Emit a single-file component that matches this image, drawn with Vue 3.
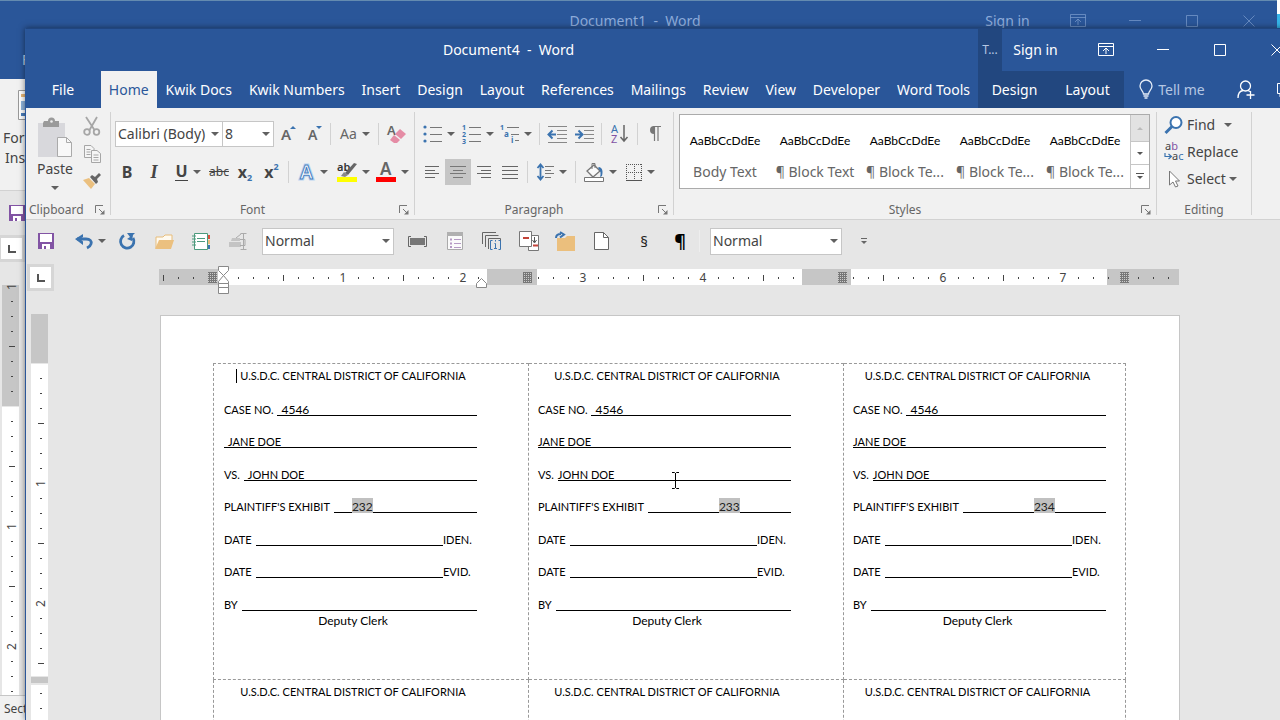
<script setup>
import { h, ref } from 'vue'

const Caret = () =>
  h('svg', { class: 'caret', width: 8, height: 4, viewBox: '0 0 8 4', 'aria-hidden': 'true' }, [
    h('path', { d: 'M0 0H8L4 4Z', fill: '#606060' }),
  ])
const Launcher = () =>
  h('svg', { width: 10, height: 10, viewBox: '0 0 10 10', 'aria-hidden': 'true' }, [
    h('path', { d: 'M.5 8V.5H8M4 4l4 4', fill: 'none', stroke: '#777' }),
    h('path', { d: 'M9.500 5v4.500H5z', fill: '#777' }),
  ])

const tabs = ['File', 'Home', 'Kwik Docs', 'Kwik Numbers', 'Insert', 'Design', 'Layout', 'References', 'Mailings', 'Review', 'View', 'Developer', 'Word Tools']
const active = ref('Home')
const styleNames = ['Body Text', '¶ Block Text', '¶ Block Te...', '¶ Block Te...', '¶ Block Te...']

const heading = 'U.S.D.C. CENTRAL DISTRICT OF CALIFORNIA'
const labels = [
  { exhibit: '232', first: true },
  { exhibit: '233' },
  { exhibit: '234' },
]

/* Horizontal ruler: 120 units per inch, zero at 64 */
const hShade = [[0, 59], [328, 50], [643, 49], [948, 72]]
const hGrids = [49, 364, 679, 961]
const hMarks = []
for (let i = -4; i <= 63; i++) {
  const x = 64 + i * 15
  const skip = i === -1 || i === 0 || (x > 325 && x < 378) || (x > 640 && x < 692) || i === 60
  if (skip) continue
  if (i > 0 && i % 8 === 0) hMarks.push({ x, n: i / 8 })
  else hMarks.push({ x, tall: i % 4 === 0 })
}

/* Vertical rulers share the same scale */
const vMarks = (zero, from, to) => {
  const out = []
  for (let i = from; i <= to; i++) {
    if (i === 0) continue
    const y = zero + i * 15
    if (i % 8 === 0) out.push({ y, n: Math.abs(i / 8) })
    else out.push({ y, tall: i % 4 === 0 })
  }
  return out
}
const frontMarks = vMarks(49, 1, 20).concat([{ y: 379 }, { y: 394 }])
const backMarks = vMarks(121, -8, 19)
</script>

<template>
  <div class="desktop">
    <section class="window back" aria-label="Document1">
      <header class="titlebar">
        <h2 class="title">Document1&nbsp; -&nbsp; Word</h2>
        <button class="signin">Sign in</button>
        <button class="winbtn" aria-label="Ribbon options"><svg width="16" height="14" viewBox="0 0 16 14"><path d="M.5.5h15v12H.500zM.5 3.500h15M8 11V5.500M5 8l3-3 3 3" /></svg></button>
        <button class="winbtn" aria-label="Minimize"><svg width="12" height="14" viewBox="0 0 12 14"><path d="M0 6.500h12" /></svg></button>
        <button class="winbtn" aria-label="Maximize"><svg width="12" height="12" viewBox="0 0 12 12"><path d="M.5.5h11v11H.5z" /></svg></button>
        <button class="winbtn" aria-label="Close"><svg width="12" height="12" viewBox="0 0 12 12"><path d="M.5.5l11 11M11.500.5l-11 11" /></svg></button>
      </header>
      <div class="back-tab">File</div>
      <div class="back-ribbon">
        <svg width="16" height="30" viewBox="0 0 16 30"><path d="M.5.5h15v29H.5z" fill="#fff" stroke="#999" /><path d="M3 4h12v3H3z" fill="#e8b878" /><path d="M3 11h12v9H3z" fill="#8fb3dc" /><path d="M3 23h12v3H3z" fill="#4a7ebb" /></svg>
        <span>Form</span>
        <span>Insert</span>
      </div>
      <div class="back-qat">
        <svg width="16" height="16" viewBox="0 0 16 16"><path d="M0 0h16v16H0z" fill="#8254a4" /><path d="M2 1h12v8H2zM4 11h8v5H4z" fill="#fff" /><path d="M6 13h2v3H6z" fill="#8254a4" /></svg>
      </div>
      <button class="tabsel" aria-label="Tab selector"><svg width="8" height="8" viewBox="0 0 8 8"><path d="M1 0v7h7" fill="none" stroke="#555" stroke-width="2" /></svg></button>
      <svg class="vruler" width="17" height="410" viewBox="0 0 17 410">
        <path d="M0 0h17v121H0z" fill="#c6c6c6" /><path d="M0 122h17v288H0z" fill="#fff" />
        <template v-for="m in backMarks" :key="m.y">
          <text v-if="m.n" :transform="`translate(14 ${m.y + 4}) rotate(-90)`">{{ m.n }}</text>
          <path v-else :d="m.tall ? `M7 ${m.y + .5}h6` : `M9 ${m.y + .5}h2`" stroke="#444" />
        </template>
      </svg>
      <footer class="back-status">Section</footer>
    </section>

    <section class="window front" aria-label="Document4">
      <header class="titlebar">
        <h1 class="title">Document4&nbsp; -&nbsp; Word</h1>
        <span class="ctx-title">T...</span>
        <button class="signin">Sign in</button>
        <button class="winbtn" aria-label="Ribbon options"><svg width="16" height="14" viewBox="0 0 16 14"><path d="M.5.5h15v12H.500zM.5 3.500h15M8 11V5.500M5 8l3-3 3 3" /></svg></button>
        <button class="winbtn" aria-label="Minimize"><svg width="12" height="14" viewBox="0 0 12 14"><path d="M0 6.500h12" /></svg></button>
        <button class="winbtn" aria-label="Maximize"><svg width="12" height="12" viewBox="0 0 12 12"><path d="M.5.5h11v11H.5z" /></svg></button>
        <button class="winbtn" aria-label="Close"><svg width="12" height="12" viewBox="0 0 12 12"><path d="M.5.5l11 11M11.500.5l-11 11" /></svg></button>
      </header>

      <nav class="tabs">
        <div class="main-tabs">
          <button v-for="t in tabs" :key="t" class="tab" :class="{ on: t === active, file: t === 'File' }" @click="active = t">{{ t }}</button>
        </div>
        <div class="ctx-tabs"><button class="tab">Design</button><button class="tab">Layout</button></div>
        <button class="tellme">
          <svg width="14" height="19" viewBox="0 0 14 19" fill="none" stroke="#e4ecf7"><path d="M4.500 14c0-3-3.500-4-3.500-8a6 6 0 0 1 12 0c0 4-3.500 5-3.500 8z" stroke-width="1.300" /><path d="M4.500 16h5M5.500 18h3" stroke-width="1.500" /></svg>
          Tell me
        </button>
        <button class="share" aria-label="Share"><svg width="18" height="19" viewBox="0 0 18 19" fill="none" stroke="#fff" stroke-width="1.300"><circle cx="8.500" cy="6" r="5" /><path d="M1 18c0-4 2-7 5-7.500M11 10.500l2 1M13.500 11v8M9.500 15h8" /></svg></button>
        <button class="comments" aria-label="Comments"><svg width="16" height="14" viewBox="0 0 16 14" fill="none" stroke="#fff"><path d="M.5.5h15v10H6l-3 3v-3H.5z" /></svg></button>
      </nav>

      <div class="ribbon">
        <section class="group clipboard">
          <div class="clip-body">
            <button class="paste">
              <svg width="36" height="40" viewBox="0 0 36 40"><path d="M1 5h27v34H1z" fill="#d8d8dc" /><path d="M7 3h4a3.500 3.500 0 0 1 7 0h4v6H6V5z" fill="#9a9a9a" /><circle cx="14.500" cy="3.500" r="1.300" fill="#eee" /><path d="M20.500 19.500h9l5 5v14h-14z" fill="#f8f8f8" stroke="#aaa" /><path d="M29.500 19.500v5h5" fill="none" stroke="#aaa" /></svg>
              <span>Paste</span>
              <Caret />
            </button>
            <div class="clip-side">
              <button aria-label="Cut"><svg width="18" height="19" viewBox="0 0 18 19" fill="none" stroke="#a6a6a6" stroke-width="1.800"><path d="M3 0l8.500 13M14 0L6.500 13" /><circle cx="4" cy="15" r="2.800" /><circle cx="13.500" cy="15" r="2.800" /></svg></button>
              <button aria-label="Copy"><svg width="17" height="18" viewBox="0 0 17 18" fill="#f5f5f5" stroke="#a6a6a6"><path d="M.5.500H7l3 3v9H.5zM2.500 4.500h4M2.500 7h4M2.500 9.500h4" /><path d="M7.500 5.500H13l3.500 3v9h-9zM9.500 10h5M9.500 12.500h5M9.500 15h5" /></svg></button>
              <button aria-label="Format Painter"><svg width="18" height="16" viewBox="0 0 18 16"><path d="M0 7l6-2 6 6-4 5z" fill="#ebc07f" /><path d="M7 4l2-2 3 2 4-4 2 2-4 4 1 3-2 2z" fill="#666" /></svg></button>
            </div>
          </div>
          <div class="caption"><span>Clipboard</span><button class="launcher" aria-label="Clipboard options"><Launcher /></button></div>
        </section>

        <section class="group font">
          <div class="row font-one">
            <label class="combo first"><select aria-label="Font"><option>Calibri (Body)</option></select><Caret /></label>
            <label class="combo"><select aria-label="Font size"><option>8</option></select><Caret /></label>
            <button aria-label="Grow font"><svg width="16" height="18" viewBox="0 0 16 18"><text x="0" y="15" class="gl" font-size="15">A</text><path d="M9 4h6l-3-3z" fill="#3b73af" /></svg></button>
            <button aria-label="Shrink font"><svg width="14" height="18" viewBox="0 0 14 18"><text x="0" y="15" class="gl" font-size="14">A</text><path d="M8 1h6l-3 3z" fill="#3b73af" /></svg></button>
            <i class="sep"></i>
            <button aria-label="Change case"><span class="case">Aa</span><Caret /></button>
            <i class="sep"></i>
            <button aria-label="Clear formatting"><svg width="20" height="20" viewBox="0 0 20 20"><text x="0" y="11" class="gl" font-size="13">A</text><path d="M13 5l6 5-5 5-6-5z" fill="#e58ca5" /><path d="M7 11l6 5-3 3H7l-4-3z" fill="#e58ca5" /></svg></button>
          </div>
          <div class="row font-two">
            <button class="b">B</button>
            <button class="i">I</button>
            <button aria-label="Underline"><span class="u">U</span><Caret /></button>
            <button class="s">abc</button>
            <button class="x" aria-label="Subscript">x<sub>2</sub></button>
            <button class="x" aria-label="Superscript">x<sup>2</sup></button>
            <i class="sep"></i>
            <button aria-label="Text effects"><svg width="16" height="20" viewBox="0 0 16 20"><text x="1" y="17" font-size="19" font-weight="600" fill="#fff" stroke="#bcd6f1" stroke-width="3">A</text><text x="1" y="17" font-size="19" font-weight="600" fill="#fff" stroke="#4a7fc0">A</text></svg><Caret /></button>
            <button aria-label="Highlight"><svg width="20" height="20" viewBox="0 0 20 20"><text x="0" y="9" font-size="11" fill="#333" font-weight="600">ab</text><path d="M8 11L17 1l3 1-9 11z" fill="#666" /><path d="M4 14l3-4 4 3-3 2z" fill="#888" /><path d="M0 15h20v5H0z" fill="#ff0" /></svg><Caret /></button>
            <button aria-label="Font color"><svg width="20" height="20" viewBox="0 0 20 20"><text x="4" y="13" class="gl" font-size="17">A</text><path d="M0 15h20v5H0z" fill="#f00" /></svg><Caret /></button>
          </div>
          <div class="caption"><span>Font</span><button class="launcher" aria-label="Font options"><Launcher /></button></div>
        </section>

        <section class="group para">
          <div class="row para-one">
            <button aria-label="Bullets"><svg width="19" height="18" viewBox="0 0 19 18"><g fill="#3b73af"><circle cx="2" cy="2" r="1.600" /><circle cx="2" cy="9" r="1.600" /><circle cx="2" cy="16" r="1.600" /></g><path d="M7 2.500h12M7 9.500h12M7 16.500h12" stroke="#777" /></svg><Caret /></button>
            <button aria-label="Numbering"><svg width="19" height="20" viewBox="0 0 19 20"><g fill="#3b73af" font-size="7" font-weight="700"><text y="6">1</text><text y="13">2</text><text y="20">3</text></g><path d="M7 3.500h12M7 10.500h12M7 17.500h12" stroke="#777" /></svg><Caret /></button>
            <button aria-label="Multilevel list"><svg width="19" height="20" viewBox="0 0 19 20"><g fill="#3b73af" font-weight="700"><text y="6" font-size="7">1</text><text x="4" y="13" font-size="8">a</text><text x="11" y="19" font-size="8">i</text></g><path d="M7 3.500h12M11 10.500h8M15 16.500h4" stroke="#777" /></svg><Caret /></button>
            <i class="sep"></i>
            <button aria-label="Decrease indent"><svg width="19" height="17" viewBox="0 0 19 17"><path d="M0 .5h19M9 4.500h10M9 8.500h10M9 12.500h10M0 16.500h19" stroke="#888" /><path d="M8 8.500H1M4.500 4.500l-4 4 4 4" fill="none" stroke="#3b73af" stroke-width="2" /></svg></button>
            <button aria-label="Increase indent"><svg width="19" height="17" viewBox="0 0 19 17"><path d="M0 .5h19M9 4.500h10M9 8.500h10M9 12.500h10M0 16.500h19" stroke="#888" /><path d="M0 8.500h7M3.500 4.500l4 4-4 4" fill="none" stroke="#3b73af" stroke-width="2" /></svg></button>
            <i class="sep"></i>
            <button aria-label="Sort"><svg width="17" height="20" viewBox="0 0 17 20"><text y="9" font-size="11" fill="#3b73af">A</text><text y="19" font-size="11" fill="#8254a4">Z</text><path d="M13 1v16M9.500 13l3.500 4 3.500-4" fill="none" stroke="#666" stroke-width="1.500" /></svg></button>
            <i class="sep"></i>
            <button aria-label="Show marks"><svg width="12" height="16" viewBox="0 0 12 16"><path d="M5 0a4 4 0 0 0 0 8z" fill="#777" /><path d="M4 .5h8M5.500 0v15M9 0v15" stroke="#777" stroke-width="1.200" /></svg></button>
          </div>
          <div class="row para-two">
            <button aria-label="Align left"><svg width="14" height="12" viewBox="0 0 14 12" stroke="#666"><path d="M0 .5h14M0 4.500h10M0 7.500h14M0 11.500h10" /></svg></button>
            <button class="pressed" aria-label="Center"><svg width="16" height="12" viewBox="0 0 16 12" stroke="#777"><path d="M0 .5h16M3 4.500h10M0 7.500h16M3 11.500h10" /></svg></button>
            <button aria-label="Align right"><svg width="14" height="12" viewBox="0 0 14 12" stroke="#666"><path d="M0 .5h14M4 4.500h10M0 7.500h14M4 11.500h10" /></svg></button>
            <button aria-label="Justify"><svg width="16" height="13" viewBox="0 0 16 13" stroke="#666"><path d="M0 .5h16M0 4.500h16M0 8.500h16M0 12.500h16" /></svg></button>
            <i class="sep"></i>
            <button aria-label="Line spacing"><svg width="17" height="18" viewBox="0 0 17 18" fill="none"><path d="M3.500 1.500v15M.5 5l3-3.500 3 3.500M.5 13l3 3.500 3-3.500" stroke="#3b73af" stroke-width="1.800" /><path d="M8 3.500h9M8 7.500h6M8 10.500h9M8 14.500h6" stroke="#777" /></svg><Caret /></button>
            <i class="sep"></i>
            <button aria-label="Shading"><svg width="20" height="20" viewBox="0 0 20 20"><path d="M3 9l7-6 6 6-7 6z" fill="#fafafa" stroke="#777" stroke-width="1.300" /><path d="M8 7V1.500h3V6" fill="none" stroke="#777" /><path d="M15 5c4 1 4 5 3 9l-2 1c1-3 1-6-2-9z" fill="#3b73af" /><path d="M.5 15.500h19v4H.5z" fill="#fff" stroke="#777" /></svg><Caret /></button>
            <button aria-label="Borders"><svg width="16" height="17" viewBox="0 0 16 17" fill="none" stroke="#555"><path d="M0 .5h16M0 8.500h16M.5 0v16M8.500 0v16M15.500 0v16" stroke-dasharray="1 1" /><path d="M0 16.500h16" /></svg><Caret /></button>
          </div>
          <div class="caption"><span>Paragraph</span><button class="launcher" aria-label="Paragraph options"><Launcher /></button></div>
        </section>

        <section class="group styles">
          <div class="gallery">
            <button v-for="(s, i) in styleNames" :key="i" class="style-item"><span class="preview">AaBbCcDdEe</span><span>{{ s }}</span></button>
            <div class="gallery-nav">
              <button class="off" aria-label="Previous styles"><svg width="6" height="3" viewBox="0 0 6 3"><path d="M0 3h6L3 0z" fill="#bbb" /></svg></button>
              <button aria-label="Next styles"><svg width="6" height="3" viewBox="0 0 6 3"><path d="M0 0h6L3 3z" fill="#555" /></svg></button>
              <button aria-label="More styles"><svg width="8" height="7" viewBox="0 0 8 7"><path d="M0 .5h8" stroke="#555" /><path d="M1 3h6L4 6z" fill="#555" /></svg></button>
            </div>
          </div>
          <div class="caption"><span>Styles</span><button class="launcher" aria-label="Styles options"><Launcher /></button></div>
        </section>

        <section class="group editing">
          <div class="edit-list">
            <button><svg width="20" height="18" viewBox="0 0 20 18"><circle cx="12" cy="6.500" r="5.500" fill="#fff" stroke="#3b73af" stroke-width="2" /><path d="M8 10.500L1.500 17" stroke="#3b73af" stroke-width="3" /></svg><span>Find</span><Caret /></button>
            <button><svg width="20" height="18" viewBox="0 0 20 18"><text x="1" y="7" font-size="11" fill="#444">a<tspan fill="#8254a4">b</tspan></text><text x="8" y="17" font-size="11" fill="#444">a<tspan fill="#3b73af">c</tspan></text><path d="M1 10v3.500h6M4.500 11l3 2.500-3 2.500" fill="none" stroke="#3b73af" stroke-width="1.200" /></svg><span>Replace</span></button>
            <button class="select"><svg width="20" height="18" viewBox="0 0 20 18"><path d="M5.500 1v14l3.500-3 2.500 5 2.500-1-2.500-5h4z" fill="#fff" stroke="#777" /></svg><span>Select</span><Caret /></button>
          </div>
          <div class="caption"><span>Editing</span></div>
        </section>
      </div>

      <div class="qat">
        <button aria-label="Save"><svg width="16" height="16" viewBox="0 0 16 16"><path d="M0 0h16v16H0z" fill="#8254a4" /><path d="M2 1h12v8H2zM4 11h8v5H4z" fill="#fff" /><path d="M6 13h2v3H6z" fill="#8254a4" /></svg></button>
        <button aria-label="Undo"><svg width="18" height="15" viewBox="0 0 18 15"><path d="M2 5h9c4 0 6 2 5 5-.500 2-2 3-4 4" fill="none" stroke="#3b73af" stroke-width="2.800" /><path d="M8 0v3L5 5l3 2.500v3.500L0 5z" fill="#3b73af" /></svg><Caret /></button>
        <button aria-label="Redo"><svg width="17" height="17" viewBox="0 0 17 17"><path d="M5 2.500A6.700 6.700 0 1 0 14 5" fill="none" stroke="#3b73af" stroke-width="2.800" /><path d="M8 0h8l-2 2-1 6-5-2 3-2z" fill="#3b73af" /></svg></button>
        <button aria-label="Open"><svg width="19" height="15" viewBox="0 0 19 15"><path d="M1 14V3h7l2-2h7v5" fill="#fffaf0" stroke="#e8bd7b" /><path d="M4 6h15l-3 9H0z" fill="#ebc07f" /></svg></button>
        <button aria-label="Contacts"><svg width="18" height="17" viewBox="0 0 18 17"><path d="M2.500.5h13v16h-13z" fill="#fff" stroke="#4c9a7d" /><path d="M5 5.500h8M5 8.500h8" stroke="#4c9a7d" /><path d="M0 3h4M0 6h4M0 9h4M0 12h4" stroke="#4c9a7d" /><path d="M16 2h2v4h-2z" fill="#e04f3b" /><path d="M16 7h2v4h-2z" fill="#e8bd7b" /><path d="M16 12h2v4h-2z" fill="#3b73af" /></svg></button>
        <button aria-label="Design mode"><svg width="18" height="17" viewBox="0 0 18 17"><path d="M0 9h12v5H0zM3 5h8v3H2z" fill="#c4c4c4" /><path d="M11.500.5h6M14.500 0v16M11.500 16.500h6M7 5l5-4" stroke="#aaa" /><path d="M11 6.500h5v6h-5" fill="none" stroke="#aaa" /></svg></button>
        <label class="combo"><select aria-label="Style"><option>Normal</option></select><Caret /></label>
        <button aria-label="Text field"><svg width="19" height="11" viewBox="0 0 19 11"><path d="M3 .5H.5v10H3M16 .5h2.500v10H16" fill="none" stroke="#666" /><path d="M2 2h15v7H2z" fill="#777" /></svg></button>
        <button aria-label="Properties"><svg width="16" height="18" viewBox="0 0 16 18"><path d="M.5.5h15v17H.5z" fill="#fafafa" stroke="#aaa" /><path d="M0 0h16v4H0z" fill="#b0b0b0" /><path d="M7 7.500h7M7 11.500h7M7 15.500h7" stroke="#b59ac4" /><path d="M3 6.500h2v2H3zM3 10.500h2v2H3zM3 14h2v2H3z" fill="#b59ac4" /></svg></button>
        <button aria-label="Field codes"><svg width="20" height="18" viewBox="0 0 20 18"><path d="M.5 12V.5H14M3.500 15V3.500h13M6.500 17V6.500h12V9" fill="none" stroke="#666" /><path d="M10.500 8.500h-2v9h2M16.500 8.500h2v9h-2M13.500 8v1.500M12.500 11.500h1v5M12 16.500h3" fill="none" stroke="#3b73af" /></svg></button>
        <button aria-label="Insert document"><svg width="20" height="20" viewBox="0 0 20 20"><path d="M9.500 4.500h10v15h-10z" fill="#fff" stroke="#777" /><path d="M.5.5h12v15H.5z" fill="#fff" stroke="#777" /><path d="M4 7h6M14 14.500h5" stroke="#c3443a" stroke-width="2" /><path d="M15.500 6v5M13.500 9l2 3 2-3" fill="none" stroke="#555" /></svg></button>
        <button aria-label="Move to folder"><svg width="19" height="19" viewBox="0 0 19 19"><path d="M1 6h8l2-2h8v15H1z" fill="#ebbf7d" /><path d="M0 6c0-3 2-4 5-4M4 0l4 2.500L4 5.500" fill="none" stroke="#3b73af" stroke-width="2" /></svg></button>
        <button aria-label="New"><svg width="15" height="18" viewBox="0 0 15 18"><path d="M.5.5h9l5 5v12H.5z" fill="#fff" stroke="#666" /><path d="M9.500.5v5h5" fill="none" stroke="#666" /></svg></button>
        <button class="sign">§</button>
        <button class="sign bold" aria-label="Paragraph mark">¶</button>
        <i class="sep"></i>
        <label class="combo"><select aria-label="Quick style"><option>Normal</option></select><Caret /></label>
        <button aria-label="Customize toolbar"><svg width="6" height="7" viewBox="0 0 6 7"><path d="M0 .5h6" stroke="#666" /><path d="M0 3h6L3 6z" fill="#666" /></svg></button>
      </div>

      <div class="hrow">
        <button class="tabsel" aria-label="Tab selector"><svg width="8" height="8" viewBox="0 0 8 8"><path d="M1 0v7h7" fill="none" stroke="#555" stroke-width="2" /></svg></button>
        <svg class="hruler" width="1020" height="32" viewBox="0 0 1020 32">
          <defs><pattern id="weave" width="2" height="2" patternUnits="userSpaceOnUse"><path d="M0 0h2v2H0z" fill="#777" /><path d="M1 1h1v1H1z" fill="#ccc" /></pattern></defs>
          <path d="M0 5h1020v16H0z" fill="#fff" />
          <path v-for="s in hShade" :key="s[0]" :d="`M${s[0]} 5h${s[1]}v16h-${s[1]}z`" fill="#c6c6c6" />
          <template v-for="m in hMarks" :key="m.x">
            <text v-if="m.n" :x="m.x" y="18" text-anchor="middle">{{ m.n }}</text>
            <path v-else :d="m.tall ? `M${m.x + .5} 11v6` : `M${m.x + .5} 13v2`" stroke="#444" />
          </template>
          <rect v-for="g in hGrids" :key="g" :x="g" y="8" width="9" height="11" fill="url(#weave)" />
          <path d="M59.500 2.500h10v4l-5 5-5-5zM59.500 19.500v-2l5-6 5 6v2zM59.500 23.500h10v6h-10zM59.500 19.500h10v4h-10z" fill="#fff" stroke="#888" />
          <path d="M317.500 23.500v-4l5-5 5 5v4z" fill="#fff" stroke="#888" />
        </svg>
      </div>

      <div class="doc">
        <svg class="vruler" width="17" height="406" viewBox="0 0 17 406">
          <path d="M0 0h17v49H0zM0 363h17v6H0z" fill="#c6c6c6" /><path d="M0 50h17v312H0zM0 371h17v35H0z" fill="#fff" />
          <template v-for="m in frontMarks" :key="m.y">
            <text v-if="m.n" :transform="`translate(14 ${m.y + 4}) rotate(-90)`">{{ m.n }}</text>
            <path v-else :d="m.tall ? `M7 ${m.y + .5}h6` : `M9 ${m.y + .5}h2`" stroke="#444" />
          </template>
        </svg>
        <main class="page">
          <table>
            <tbody>
              <tr>
                <td v-for="l in labels" :key="l.exhibit">
                  <p class="head"><span v-if="l.first" class="insertion"></span>{{ heading }}</p>
                  <div class="lines">
                    <div class="line"><span>CASE NO.</span><span class="fill lead number">4546</span></div>
                    <div class="line"><span class="fill" :class="{ lead: l.first }">JANE DOE</span></div>
                    <div class="line"><span>VS.</span><span class="fill" :class="{ lead: l.first }">JOHN DOE</span></div>
                    <div class="line"><span>PLAINTIFF'S EXHIBIT</span><span class="fill number" :class="l.first ? 'near' : 'far'"><mark>{{ l.exhibit }}</mark></span></div>
                    <div class="line"><span>DATE</span><span class="fill"></span><span class="end">IDEN.</span></div>
                    <div class="line"><span>DATE</span><span class="fill"></span><span class="end">EVID.</span></div>
                    <div class="line"><span>BY</span><span class="fill"></span></div>
                  </div>
                  <p class="clerk">Deputy Clerk</p>
                </td>
              </tr>
              <tr>
                <td v-for="l in labels" :key="l.exhibit"><p class="head">{{ heading }}</p></td>
              </tr>
            </tbody>
          </table>
          <svg class="ibeam" width="9" height="17" viewBox="0 0 9 17"><path d="M1 .5h2.500l1 1 1-1H8M4.500 1v15M1 16.500h2.500l1-1 1 1H8" fill="none" stroke="#000" /></svg>
        </main>
      </div>
    </section>
  </div>
</template>

<style>
body { margin: 0; overflow: hidden; }
</style>

<style scoped>
.desktop {
  position: relative;
  height: 100vh;
  overflow: hidden;
  background: linear-gradient(#fff 14px, #35b4e8 14px);
  font: 14px/20px "Noto Sans", "Open Sans", sans-serif;
  color: #444;
}
.desktop * { box-sizing: border-box; }
button { border: 0; padding: 0; margin: 0; background: none; font: inherit; color: inherit; }
button, label { display: flex; align-items: center; justify-content: center; gap: 5px; }
svg { display: block; flex: none; overflow: visible; font-family: "Noto Sans", sans-serif; }
.window { position: absolute; display: flex; flex-direction: column; background: #e6e6e6; }
.back { left: 0; top: 0; right: 3px; bottom: 0; border-top: 1px solid #648bb0; }
.front { left: 25px; top: 28px; right: -25px; bottom: 0; border-left: 1px solid #2b579a; border-top: 1px solid #20457f; box-shadow: 0 0 6px rgba(0, 0, 0, .5); }

.titlebar { display: flex; flex: none; height: 42px; background: #2a5699; color: #fff; }
.title { flex: 1; margin: 0; padding-left: 13px; font-size: 14px; line-height: 41px; font-weight: 400; text-align: center; }
.ctx-title { width: 24px; background: #22477f; color: #b5c7e3; font-size: 12px; line-height: 41px; text-align: center; }
.signin { width: 75px; padding-right: 8px; }
.winbtn { width: 57px; }
.winbtn svg { fill: none; stroke: currentColor; }
.back .titlebar { height: 50px; padding-bottom: 11px; color: #8eacd9; }
.back .title { padding-left: 296px; line-height: 39px; }
.back .winbtn svg { opacity: .6; }

.back-tab { flex: none; height: 28px; padding: 0 22px; background: #2a5699; color: #c4d4ec; line-height: 18px; }
.back-ribbon { flex: none; height: 112px; padding: 11px 0 0 5px; background: #f1f1f1; border-bottom: 1px solid #d2d2d2; }
.back-ribbon svg { margin: 0 0 8px 13px; }
.back-ribbon span { display: block; width: 40px; margin-left: -2px; }
.back-ribbon span + span { margin-left: 0; }
.back-qat { flex: none; height: 44px; padding: 14px 9px; }
.back .tabsel { margin-left: -2px; }
.back .vruler { margin: 23px 0 0 2px; }
.back-status { flex: none; padding-left: 4px; border-top: 1px solid #c6c6c6; background: #f1f1f1; font-size: 12px; line-height: 26px; }

.tabs { display: flex; flex: none; height: 37px; background: #2a5699; color: #fff; }
.main-tabs { display: flex; flex: 1; justify-content: space-between; min-width: 0; overflow: hidden; }
.tab { flex: none; padding: 0 8px; }
.tab.file { width: 74px; }
.tab.on { background: #f1f1f1; color: #2b579a; }
.ctx-tabs { display: flex; width: 146px; background: #22477f; }
.ctx-tabs .tab { width: 73px; }
.tellme { width: 96px; color: #b5c7e3; }
.share { width: 52px; }
.comments { width: 33px; justify-content: flex-end; padding-right: 12px; }

.ribbon { display: flex; flex: none; height: 112px; padding-top: 4px; background: #f1f1f1; border-bottom: 1px solid #d2d2d2; }
.group { position: relative; height: 103px; border-right: 1px solid #d2d2d2; }
.caption { position: absolute; inset: auto 0 -5px 0; display: flex; justify-content: center; font-size: 12px; line-height: 20px; color: #666; }
.font .caption, .para .caption, .styles .caption { padding-right: 20px; }
.caption .launcher { position: absolute; right: 5px; top: 5px; }
.clipboard { width: 85px; }
.clipboard .caption { justify-content: flex-start; padding-left: 3px; }
.clip-body { display: flex; gap: 8px; padding: 1px 0 0 9px; }
.paste { flex-direction: column; gap: 1px; width: 40px; }
.paste .caret { margin-top: 6px; }
.clip-side { display: flex; flex-direction: column; width: 18px; }
.clip-side button { height: 27px; }
.font { width: 304px; }
.para { width: 259px; }
.row { display: grid; height: 26px; }
.font .row, .para .row { margin-top: 9px; }
.font .row + .row, .para .row + .row { margin-top: 12px; }
.font-one, .font-two { margin-left: 4px; }
.font-one { grid-template-columns: 107px 52px 29px 23px 8px 42px 4px 34px; }
.font-two { grid-template-columns: 24px 30px 38px 24px 28px 25px 8px 42px 38px 40px; }
.para-one, .para-two { margin-left: 3px; }
.para-one { grid-template-columns: 41px 38px 38px 9px 27px 26px 9px 27px 9px 26px; }
.para-two { grid-template-columns: 27px 26px 26px 26px 9px 40px 7px 42px 38px; }
.sep { justify-self: center; align-self: center; width: 1px; height: 22px; background: #d2d2d2; }
.pressed { background: #c6c6c6; }
.gl { fill: #666; font-weight: 600; }
.case { color: #666; }
.b, .u, .x { font-weight: 700; font-size: 16px; }
.i { font: italic 700 18px "Liberation Serif", serif; }
.u { border-bottom: 1px solid #444; line-height: 17px; }
.s { font-size: 12px; text-decoration: line-through; }
.font-two .x { gap: 0; }
.x sub, .x sup { font-size: 9px; line-height: 9px; color: #3b73af; }
.x sub { margin-top: 10px; }
.x sup { margin-bottom: 12px; }

.combo { position: relative; height: 26px; background: #fff; border: 1px solid #c6c6c6; }
.combo select { width: 100%; height: 24px; padding: 0 16px 0 2px; border: 0; appearance: none; background: none; font: inherit; color: #444; text-overflow: clip; overflow: hidden; }
.combo .caret { position: absolute; right: 3px; top: 10px; pointer-events: none; }
.combo.first { border-right: 0; }

.styles { width: 483px; padding: 2px 5px; }
.gallery { display: flex; width: 471px; height: 75px; background: #fff; border: 1px solid #ababab; }
.style-item { flex-direction: column; flex: 1; gap: 11px; padding-top: 9px; color: #666; white-space: nowrap; }
.preview { color: #000; font: 12px/20px Lato, sans-serif; }
.gallery-nav { display: grid; grid-template-rows: 26px 23px 24px; width: 19px; border-left: 1px solid #c6c6c6; }
.gallery-nav button + button { border-top: 1px solid #c6c6c6; }
.gallery-nav .off { background: #e2e2e2; }
.editing { width: 95px; }
.edit-list { display: flex; flex-direction: column; padding-left: 7px; }
.edit-list button { justify-content: flex-start; gap: 3px; height: 27px; padding-bottom: 2px; }
.edit-list .caret { margin-left: 6px; }
.edit-list .select .caret { margin-left: 0; }

.qat { display: grid; flex: none; align-items: center; height: 42px; grid-template-columns: 40px 49px 24px 50px 24px 49px 132px 46px 30px 44px 30px 42px 30px 56px 16px 22px 132px 44px; }
.qat .combo { height: 27px; }
.sign { font-size: 15px; color: #222; }
.sign.bold { font-size: 18px; font-weight: 700; color: #000; }
.qat .sep { background: #eee; }

.tabsel { flex: none; width: 27px; height: 27px; border: 3px solid #d6d6d6; background: #fff; }
.hrow { display: flex; flex: none; height: 52px; padding: 2px 0 0 1px; }
.hruler { margin-left: 105px; }
.hruler text, .vruler text { font-size: 12px; fill: #444; }
.doc { display: flex; flex: 1; min-height: 0; padding-left: 5px; overflow: hidden; }
.page { position: relative; flex: none; width: 1020px; margin: 1px 0 0 112px; padding: 47px 53px 0 52px; border: 1px solid #c6c6c6; border-bottom: 0; background: #fff; color: #000; font: 11px/14px Lato, "Noto Sans", sans-serif; }
table { border-collapse: collapse; table-layout: fixed; width: 912px; }
td { width: 315px; height: 316px; padding: 5px 47px 0 9px; border: 1px dashed #999; vertical-align: top; }
td:first-child { padding: 5px 46px 0 10px; }
td:last-child { width: 282px; padding-right: 23px; }
p { margin: 0; text-align: center; white-space: nowrap; }
.head { position: relative; }
.insertion { position: absolute; left: 12px; top: 0; width: 1px; height: 14px; background: #000; }
.lines { width: 253px; }
.line { display: flex; align-items: flex-end; height: 32px; gap: 4px; white-space: nowrap; }
.line:nth-child(odd) { height: 33px; }
.line span { line-height: 11px; border-bottom: 1px solid transparent; }
.line .fill { flex: 1; height: 12px; border-color: #000; }
.number { font-size: 12px; }
.fill.lead { padding-left: 4px; }
.fill.near { padding-left: 18px; }
.fill.far { padding-left: 71px; }
.line .end { width: 34px; margin-left: -4px; }
mark { display: inline-block; margin: -3px 0 -1px; padding: 3px 0 1px; background: #c0c0c0; color: #222; }
.clerk { margin-top: 3px; font-size: 12px; }
.ibeam { position: absolute; left: 510px; top: 156px; }
</style>
